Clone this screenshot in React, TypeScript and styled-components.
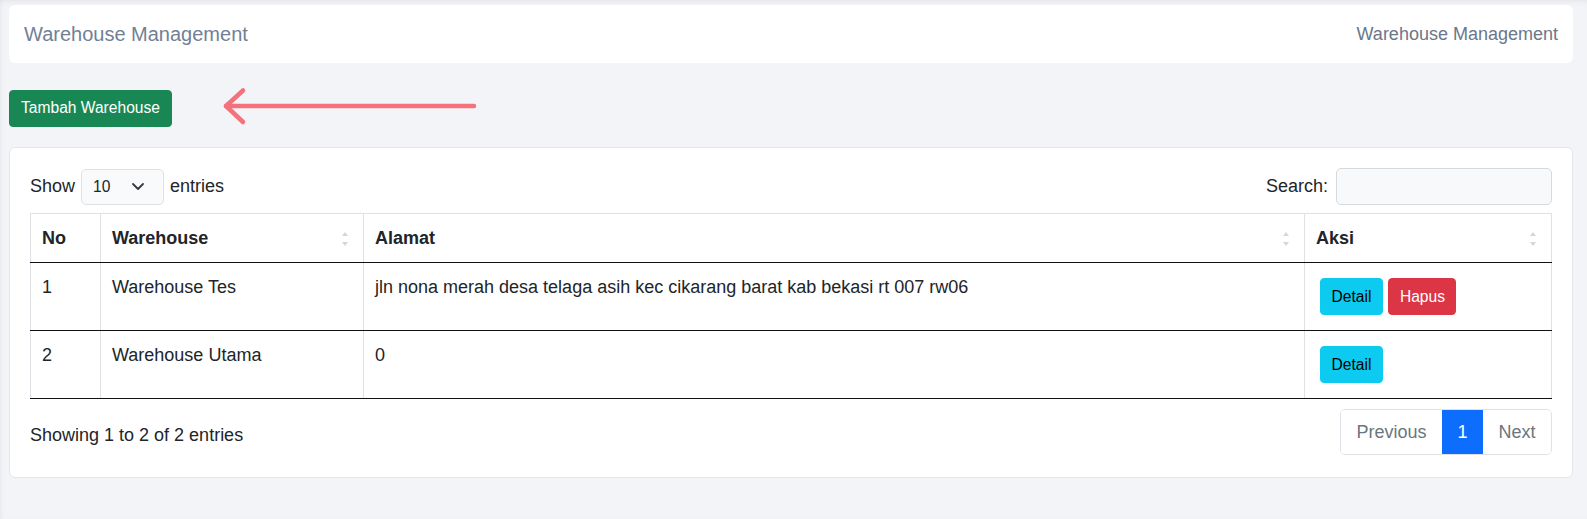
import React from "react";
import styled, { createGlobalStyle } from "styled-components";

const GlobalStyle = createGlobalStyle`
  html, body {
    margin: 0;
    padding: 0;
    background: #f3f4f8;
    font-family: "Liberation Sans", Arial, sans-serif;
    color: #212529;
  }
  * { box-sizing: border-box; }
`;

const Page = styled.div`
  min-height: 519px;
  padding: 5px 14px 0 9px;
  box-shadow: inset 0 5px 5px -3px rgba(0, 0, 0, 0.05), inset 4px 0 5px -3px rgba(0, 0, 0, 0.05);
`;

const HeaderCard = styled.header`
  height: 58px;
  background: #ffffff;
  border-radius: 6px;
  display: flex;
  align-items: center;
  justify-content: space-between;
  padding: 0 15px 0 15px;
`;

const HeaderTitle = styled.h1`
  margin: 0;
  font-size: 20px;
  font-weight: 400;
  color: #718096;
  line-height: 1.2;
`;

const Breadcrumb = styled.span`
  font-size: 18px;
  color: #6b7789;
`;

const Toolbar = styled.div`
  display: flex;
  align-items: center;
  margin-top: 24px;
  gap: 49px;
`;

const Button = styled.button<{ $variant: "success" | "info" | "danger" }>`
  height: 37px;
  padding: 0 10.5px;
  border: 1px solid
    ${(p) => (p.$variant === "success" ? "#198754" : p.$variant === "info" ? "#0dcaf0" : "#dc3545")};
  border-radius: 4px;
  background: ${(p) => (p.$variant === "success" ? "#198754" : p.$variant === "info" ? "#0dcaf0" : "#dc3545")};
  color: ${(p) => (p.$variant === "info" ? "#000000" : "#ffffff")};
  font-family: "Liberation Sans", Arial, sans-serif;
  font-size: 15.6px;
  line-height: 1;
  cursor: pointer;
`;

const WideButton = styled(Button)`
  padding: 0 11px;
`;

const ArrowSvg = styled.svg`
  display: block;
  flex: none;
`;

const Card = styled.section`
  margin-top: 18px;
  background: #ffffff;
  border: 1px solid #e3e6ea;
  border-radius: 6px;
  padding: 20px 20px 22px 20px;
`;

const TopBar = styled.div`
  display: flex;
  align-items: center;
  justify-content: space-between;
  height: 37px;
  margin-bottom: 8px;
  font-size: 18px;
`;

const Length = styled.label`
  display: flex;
  align-items: center;
  gap: 6px;
`;

const FakeSelect = styled.div`
  width: 83px;
  height: 36px;
  border: 1px solid #dee2e6;
  border-radius: 5px;
  background: #f9fafb;
  display: flex;
  align-items: center;
  justify-content: space-between;
  padding: 0 19px 0 11px;
  font-size: 15.6px;
  color: #212529;
`;

const SearchLabel = styled.label`
  display: flex;
  align-items: center;
  gap: 8px;
`;

const SearchInput = styled.input`
  width: 216px;
  height: 37px;
  border: 1px solid #d6dae0;
  border-radius: 5px;
  background: #f8f9fa;
  font-size: 15.4px;
  padding: 0 10px;
  outline: none;
`;

const Table = styled.table`
  width: 100%;
  border-collapse: collapse;
  table-layout: fixed;
  font-size: 18px;
  line-height: 26.4px;
  border-top: 1px solid #dee2e6;
`;

const Th = styled.th<{ $sortable?: boolean }>`
  position: relative;
  text-align: left;
  font-weight: 700;
  padding: 11px 11px 11px 11px;
  border-left: 1px solid #dee2e6;
  border-right: 1px solid #dee2e6;
  border-bottom: 1px solid #111111;

  ${(p) =>
    p.$sortable
      ? `
  &::before, &::after {
    content: "";
    position: absolute;
    right: 15px;
    width: 0;
    height: 0;
    border-left: 3px solid transparent;
    border-right: 3px solid transparent;
  }
  &::before {
    top: 18px;
    border-bottom: 4px solid #d6d6d6;
  }
  &::after {
    top: 28px;
    border-top: 4px solid #d6d6d6;
  }`
      : ""}
`;

const Td = styled.td`
  vertical-align: top;
  padding: 11px 11px 11px 11px;
  border-left: 1px solid #dee2e6;
  border-right: 1px solid #dee2e6;
  border-bottom: 1px solid #111111;
`;

const ActionCell = styled(Td)`
  padding: 15px 11px 15px 15px;
`;

const Actions = styled.div`
  display: flex;
  gap: 5.5px;
`;

const Footer = styled.div`
  display: flex;
  justify-content: space-between;
  align-items: flex-start;
  margin-top: 10px;
  font-size: 18px;
`;

const Info = styled.div`
  padding-top: 13px;
  line-height: 26.4px;
`;

const Pagination = styled.ul`
  display: flex;
  list-style: none;
  margin: 0;
  padding: 0;
  border: 1px solid #dee2e6;
  border-radius: 5px;
  overflow: hidden;
`;

const PageItem = styled.li<{ $active?: boolean }>`
  height: 44px;
  line-height: 44px;
  padding: 0 15.5px;
  background: ${(p) => (p.$active ? "#0d6efd" : "#ffffff")};
  color: ${(p) => (p.$active ? "#ffffff" : "#6c757d")};
`;

const rows = [
  {
    no: 1,
    name: "Warehouse Tes",
    alamat: "jln nona merah desa telaga asih kec cikarang barat kab bekasi rt 007 rw06",
    canDelete: true,
  },
  { no: 2, name: "Warehouse Utama", alamat: "0", canDelete: false },
];

export default function App() {
  return (
    <>
      <GlobalStyle />
      <Page>
        <HeaderCard>
          <HeaderTitle>Warehouse Management</HeaderTitle>
          <Breadcrumb>Warehouse Management</Breadcrumb>
        </HeaderCard>

        <Toolbar>
          <WideButton $variant="success">Tambah Warehouse</WideButton>
          <ArrowSvg width="258" height="42" viewBox="0 0 258 42">
            <g fill="none" stroke="#f4727b" strokeWidth="4.5" strokeLinecap="round" strokeLinejoin="round">
              <path d="M5 19 L253 19" />
              <path d="M22 3.5 L5 19 L22 35" />
            </g>
          </ArrowSvg>
        </Toolbar>

        <Card>
          <TopBar>
            <Length>
              Show
              <FakeSelect>
                <span>10</span>
                <svg width="12" height="7" viewBox="0 0 12 7">
                  <path d="M1 1 L6 6 L11 1" fill="none" stroke="#343a40" strokeWidth="1.8" strokeLinecap="round" strokeLinejoin="round" />
                </svg>
              </FakeSelect>
              entries
            </Length>
            <SearchLabel>
              Search:
              <SearchInput type="search" />
            </SearchLabel>
          </TopBar>

          <Table>
            <colgroup>
              <col style={{ width: 70 }} />
              <col style={{ width: 263 }} />
              <col style={{ width: 941 }} />
              <col style={{ width: 247 }} />
            </colgroup>
            <thead>
              <tr>
                <Th>No</Th>
                <Th $sortable>Warehouse</Th>
                <Th $sortable>Alamat</Th>
                <Th $sortable>Aksi</Th>
              </tr>
            </thead>
            <tbody>
              {rows.map((r) => (
                <tr key={r.no}>
                  <Td>{r.no}</Td>
                  <Td>{r.name}</Td>
                  <Td>{r.alamat}</Td>
                  <ActionCell>
                    <Actions>
                      <Button $variant="info">Detail</Button>
                      {r.canDelete && <Button $variant="danger">Hapus</Button>}
                    </Actions>
                  </ActionCell>
                </tr>
              ))}
            </tbody>
          </Table>

          <Footer>
            <Info>Showing 1 to 2 of 2 entries</Info>
            <Pagination>
              <PageItem>Previous</PageItem>
              <PageItem $active>1</PageItem>
              <PageItem>Next</PageItem>
            </Pagination>
          </Footer>
        </Card>
      </Page>
    </>
  );
}
